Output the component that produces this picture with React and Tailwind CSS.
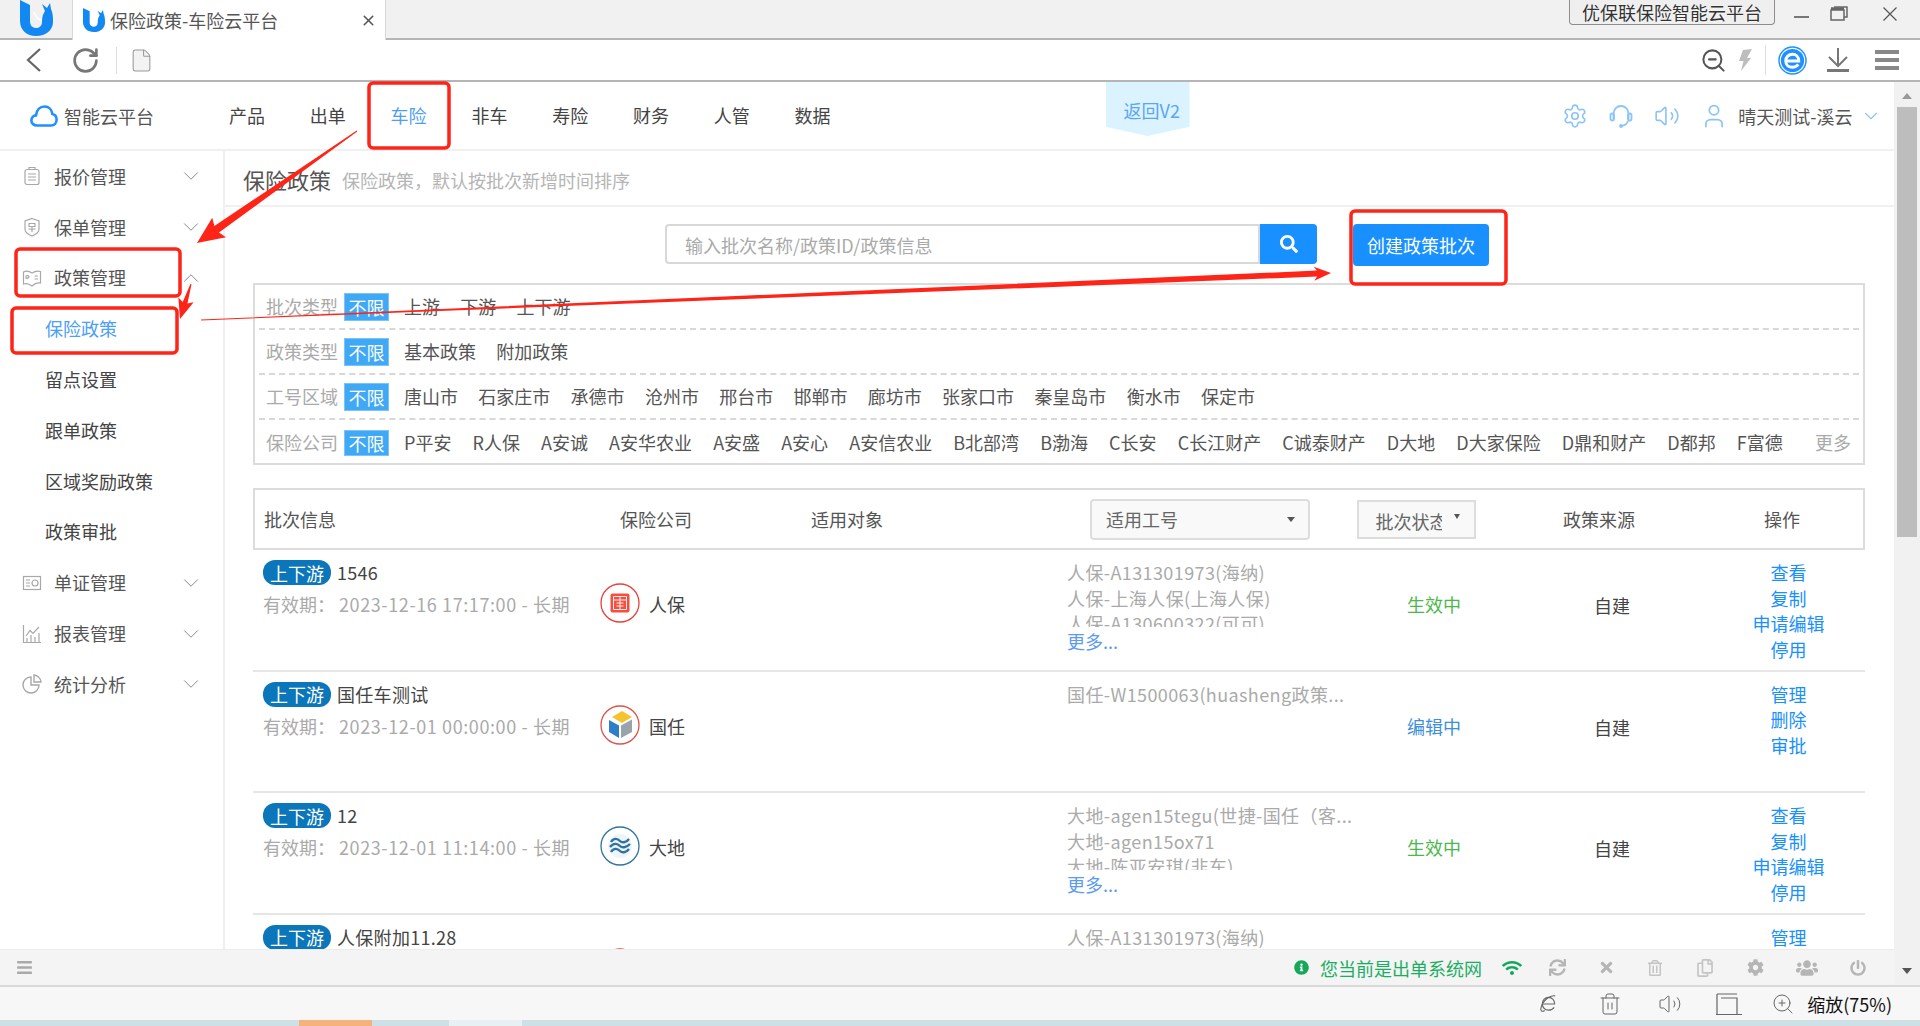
import { ChevronDown, ChevronUp, Settings, Volume2, User, RotateCw, File, X, ZoomOut, ZoomIn, Trash2 } from 'lucide-react';
import { FaInfoCircle, FaWifi, FaSync, FaTimes, FaRegTrashAlt, FaRegCopy, FaCog, FaUsers, FaPowerOff, FaBars, FaSearch } from 'react-icons/fa';

const RED = '#ff2418';

function BrandMark({ className }) {
  return (
    <svg viewBox="0 0 33 36" className={className}>
      <path d="M0 0 L10 5 V21 C10 26 13 28 16 28 C19 28 22 26 22 22 C22 17 23 14 25 11 L22 4 L27 8 L30 3 L31 9 C33 13 33 18 33 22 C33 30 26 36 16 36 C7 36 0 30 0 21 Z" fill="#1188f2" />
      <path d="M14 12 C16 18 19 20 22 20" stroke="#fff" strokeWidth="1.5" fill="none" />
    </svg>
  );
}

function CloudMark() {
  return (
    <svg viewBox="0 0 28 22" className="h-[22px] w-[28px]" fill="none" stroke="#1e90ff" strokeWidth="2.6">
      <path d="M7 20.5 C3.5 20.5 1.4 18.2 1.4 15.4 C1.4 12.6 3.4 10.6 6 10.4 C6.6 5 10 1.5 14.5 1.5 C18.8 1.5 21.8 4.6 22.4 9 C25 9.6 26.6 12 26.6 14.8 C26.6 18 24.4 20.5 21 20.5 Z" />
    </svg>
  );
}

function Headset() {
  return (
    <svg viewBox="0 0 24 24" className="h-[24px] w-[24px]" fill="none" stroke="#8cc4f8" strokeWidth="1.8">
      <path d="M4.5 15 V10 C4.5 5 8 2 12 2 C16 2 19.5 5 19.5 10 V15" />
      <rect x="1.5" y="9.5" width="3.5" height="7" rx="1.7" />
      <rect x="19" y="9.5" width="3.5" height="7" rx="1.7" />
      <path d="M19 17 C18 20 16 21.5 12.5 21.8" />
      <circle cx="12" cy="22" r="1" fill="#8cc4f8" />
    </svg>
  );
}

function EdgeBall() {
  return (
    <svg viewBox="0 0 30 30" className="h-[29px] w-[29px]" fill="none">
      <ellipse cx="15" cy="15" rx="14" ry="14" stroke="#1e90ff" strokeWidth="1.5" />
      <circle cx="15" cy="15" r="12" fill="#1e90ff" />
      <path d="M8 15.5 H21.5 C21.5 11 18.5 8.5 15 8.5 C11 8.5 8 11.5 8 15.5 C8 19.5 11 22 15 22 C17.5 22 19.5 21 21 19" stroke="#fff" strokeWidth="3" />
    </svg>
  );
}

function OutlineE() {
  return (
    <svg viewBox="0 0 20 20" className="h-[19px] w-[19px]" fill="none" stroke="#666" strokeWidth="1.2">
      <path d="M3.5 10.5 H16.5 C16.5 6 13.5 3.5 10 3.5 C6.5 3.5 3.5 6.5 3.5 10.5 C3.5 14.5 6.5 17 10 17 C12.5 17 14.5 16 16 14" />
      <path d="M17 2 C12 1 4 6 2 15 C1.5 18 3 19 6 17.5" />
    </svg>
  );
}

function RenbaoLogo() {
  return (
    <svg viewBox="0 0 40 40" className="h-[40px] w-[40px]" fill="none">
      <circle cx="20" cy="20" r="19" stroke="#e8403a" strokeWidth="1.3" />
      <rect x="10.5" y="10.5" width="19" height="19" rx="2" fill="#f4503f" />
      <path d="M13.5 13.5 H26.5 V26.5 H13.5 Z M13.5 17 H26.5 M20 13.5 V26.5 M16.5 20 H23.5 M16.5 23 H23.5" stroke="#fff" strokeWidth="0.9" />
    </svg>
  );
}

function GuorenLogo() {
  return (
    <svg viewBox="0 0 40 40" className="h-[40px] w-[40px]" fill="none">
      <circle cx="20" cy="20" r="19" stroke="#d9534f" strokeWidth="1.3" />
      <path d="M22 6 L32 12 L22 18 L12 12 Z" fill="#f4c430" />
      <path d="M9 15 L19 20.5 V33 L9 27 Z" fill="#2f7fc8" />
      <path d="M21 20.5 L32 14.5 V27 L21 33 Z" fill="#9aa3ad" />
    </svg>
  );
}

function DadiLogo() {
  return (
    <svg viewBox="0 0 40 40" className="h-[40px] w-[40px]" fill="none">
      <circle cx="20" cy="20" r="19" stroke="#2f739f" strokeWidth="1.3" />
      <circle cx="20" cy="20" r="12" fill="#eef4f7" />
      <path d="M11 16 C14 11 18 13 20 15 C22 17 26 17 29 13 M10 21 C14 16 18 18 20 20 C22 22 26 22 30 18 M11 26 C14 21 18 23 20 25 C22 27 26 27 29 23" stroke="#2f739f" strokeWidth="2.4" />
    </svg>
  );
}

function ReportIcon({ kind }) {
  const cls = 'h-[20px] w-[20px]';
  const stroke = { fill: 'none', stroke: '#a8a8a8', strokeWidth: 1.2 };
  if (kind === 'quote') {
    return (
      <svg viewBox="0 0 20 20" className={cls} {...stroke}>
        <rect x="3" y="3.5" width="14" height="15" rx="2" />
        <path d="M7 3.5 V1.5 H13 V3.5 M6 8 H14 M6 11 H14 M6 14 H14" />
      </svg>
    );
  }
  if (kind === 'shield') {
    return (
      <svg viewBox="0 0 20 20" className={cls} {...stroke}>
        <path d="M10 1.5 L17 4 V12 C17 15 14 17.5 10 19 C6 17.5 3 15 3 12 V4 Z" />
        <path d="M7 6.5 H13 V9.5 H7 Z M10 9.5 V15 M6.5 12 H13.5" />
      </svg>
    );
  }
  if (kind === 'book') {
    return (
      <svg viewBox="0 0 20 20" className={cls} {...stroke}>
        <path d="M1.5 4 C4.5 2.5 7 3 10 5 C13 3 15.5 2.5 18.5 3.5 V15 C15.5 14.5 13 15 10 18 C7 15.5 4.5 15 1.5 16 Z" />
        <path d="M4 8 L6 7.5 L7 9 L5.5 10.5 L4 10 Z M12.5 8 H16 M12.5 11 H16" />
      </svg>
    );
  }
  if (kind === 'doc') {
    return (
      <svg viewBox="0 0 20 20" className={cls} {...stroke}>
        <rect x="1.5" y="3.5" width="17" height="13" />
        <path d="M4 7 H8 M4 10 H8 M4 13 H8" />
        <circle cx="13" cy="10" r="3" />
      </svg>
    );
  }
  if (kind === 'chart') {
    return (
      <svg viewBox="0 0 20 20" className={cls} {...stroke}>
        <path d="M1.5 1 V18.5 H19 M4 12 L8 6.5 L11 9.5 L17 3" />
        <path d="M5 18 V14 M9 18 V11 M13 18 V13 M17 18 V9" />
      </svg>
    );
  }
  return (
    <svg viewBox="0 0 20 20" className={cls} fill="none" stroke="#a8a8a8" strokeWidth="1.4">
      <path d="M9 3 A8 8 0 1 0 17 11 H9 Z" />
      <path d="M12 1 A8 8 0 0 1 19 8 H12 Z" />
    </svg>
  );
}

// tapered annotation arrow, thin at the tail
function arrowPoints(x1, y1, x2, y2, tail, neck, headLen, headHalf) {
  const len = Math.hypot(x2 - x1, y2 - y1);
  const ux = (x2 - x1) / len;
  const uy = (y2 - y1) / len;
  const px = -uy;
  const py = ux;
  const bx = x2 - ux * headLen;
  const by = y2 - uy * headLen;
  const pts = [
    [x1 + px * tail, y1 + py * tail],
    [bx + px * neck, by + py * neck],
    [bx + px * headHalf - ux * 3, by + py * headHalf - uy * 3],
    [x2, y2],
    [bx - px * headHalf - ux * 3, by - py * headHalf - uy * 3],
    [bx - px * neck, by - py * neck],
    [x1 - px * tail, y1 - py * tail],
  ];
  return pts.map((p) => p.join(',')).join(' ');
}

function Annotations() {
  const boxes = [
    [369, 83, 80, 65],
    [16, 249, 164, 47],
    [12, 308, 165, 45],
    [1351, 211, 155, 73],
  ];
  return (
    <svg className="absolute left-0 top-0 z-50 h-[1026px] w-[1920px]" viewBox="0 0 1920 1026" fill="none">
      {boxes.map(([x, y, w, h]) => (
        <rect key={x} x={x} y={y} width={w} height={h} rx="4" stroke={RED} strokeWidth="3.5" />
      ))}
      <polygon points={arrowPoints(357, 131, 197, 243, 0.5, 4, 24, 12)} fill={RED} />
      <polygon points={arrowPoints(191, 284, 180, 319, 0.5, 2.5, 17, 8)} fill={RED} />
      <polygon points={arrowPoints(201, 320, 1331, 273, 0.4, 3, 14, 7)} fill={RED} />
    </svg>
  );
}

const navItems = ['产品', '出单', '车险', '非车', '寿险', '财务', '人管', '数据'];

const menu = [
  { label: '报价管理', icon: 'quote' },
  { label: '保单管理', icon: 'shield' },
  { label: '政策管理', icon: 'book', open: true },
  { label: '保险政策', sub: true, active: true },
  { label: '留点设置', sub: true },
  { label: '跟单政策', sub: true },
  { label: '区域奖励政策', sub: true },
  { label: '政策审批', sub: true },
  { label: '单证管理', icon: 'doc' },
  { label: '报表管理', icon: 'chart' },
  { label: '统计分析', icon: 'pie' },
];

const filters = [
  { label: '批次类型', items: ['上游', '下游', '上下游'], tag: 'h-[28px]', gap: 'gap-[20.3px]' },
  { label: '政策类型', items: ['基本政策', '附加政策'], tag: 'h-[28px]', gap: 'gap-[20.3px]' },
  { label: '工号区域', items: ['唐山市', '石家庄市', '承德市', '沧州市', '邢台市', '邯郸市', '廊坊市', '张家口市', '秦皇岛市', '衡水市', '保定市'], tag: 'h-[28px]', gap: 'gap-[20.3px]' },
  { label: '保险公司', items: ['P平安', 'R人保', 'A安诚', 'A安华农业', 'A安盛', 'A安心', 'A安信农业', 'B北部湾', 'B渤海', 'C长安', 'C长江财产', 'C诚泰财产', 'D大地', 'D大家保险', 'D鼎和财产', 'D都邦', 'F富德'], tag: 'h-[26px]', gap: 'gap-[21.1px]', more: true },
];

const rows = [
  {
    name: '1546',
    date: '2023-12-16 17:17:00 - 长期',
    logo: <RenbaoLogo />,
    company: '人保',
    codes: ['人保-A131301973(海纳)', '人保-上海人保(上海人保)', '人保-A130600322(可可)'],
    more: true,
    status: '生效中',
    statusClass: 'text-[#4cb84c]',
    actions: ['查看', '复制', '申请编辑', '停用'],
  },
  {
    name: '国任车测试',
    date: '2023-12-01 00:00:00 - 长期',
    logo: <GuorenLogo />,
    company: '国任',
    codes: ['国任-W1500063(huasheng政策...'],
    status: '编辑中',
    statusClass: 'text-[#3d8fd9]',
    actions: ['管理', '删除', '审批'],
  },
  {
    name: '12',
    date: '2023-12-01 11:14:00 - 长期',
    logo: <DadiLogo />,
    company: '大地',
    codes: ['大地-agen15tegu(世捷-国任（客...', '大地-agen15ox71', '大地-陈亚安琪(非车)'],
    more: true,
    status: '生效中',
    statusClass: 'text-[#4cb84c]',
    actions: ['查看', '复制', '申请编辑', '停用'],
  },
  {
    name: '人保附加11.28',
    date: '2023-11-28 00:00:00 - 长期',
    logo: <RenbaoLogo />,
    company: '人保',
    codes: ['人保-A131301973(海纳)'],
    status: '编辑中',
    statusClass: 'text-[#3d8fd9]',
    actions: ['管理'],
  },
];

const GRID = 'grid grid-cols-[347px_200px_267px_273px_200px_160px_165px]';

export default function App() {
  return (
    <div
      className="relative h-[1026px] w-[1920px] overflow-hidden bg-white text-[18px] text-[#444]"
      style={{ fontFamily: '"Noto Sans CJK SC", "Noto Sans", sans-serif' }}
    >
      {/* Browser tabs */}
      <div className="flex h-[40px] items-start border-b-2 border-[#b5b5b5] bg-[#f1f1f1]">
        <div className="flex w-[72px] pl-[20px]">
          <BrandMark className="h-[36px] w-[33px]" />
        </div>
        <div className="-mb-[2px] flex h-[40px] w-[314px] items-center border-x border-[#d8d8d8] bg-white pl-[10px] pr-[8px]">
          <BrandMark className="h-[24px] w-[22px]" />
          <span className="ml-[5px] leading-[26px] text-[#555]">保险政策-车险云平台</span>
          <X size={17} strokeWidth={2.2} className="ml-auto text-[#555]" />
        </div>
        <div className="ml-auto mr-[19px] flex h-[25px] w-[206px] items-center justify-center rounded-b border border-t-0 border-[#8d8d8d] bg-[#efefef] leading-[22px] text-[#333] [text-shadow:0_0_2px_#fff]">
          优保联保险智能云平台
        </div>
        <div className="mr-[23px] flex items-start">
          <div className="mt-[16px] h-[2px] w-[15px] bg-[#777]" />
          <svg viewBox="0 0 18 15" className="ml-[21px] mt-[6px] h-[15px] w-[18px]" fill="none" stroke="#666" strokeWidth="1.5">
            <path d="M1 4 H14 V14 H1 Z M1 3.5 H14 M4 1 H17 V11 H14" />
            <path d="M1 2.5 H14" strokeWidth="2.5" />
          </svg>
          <svg viewBox="0 0 14 14" className="ml-[35px] mt-[7px] h-[14px] w-[14px]" fill="none" stroke="#555" strokeWidth="1.2">
            <path d="M0.5 0.5 L13.5 13.5 M13.5 0.5 L0.5 13.5" />
          </svg>
        </div>
      </div>

      {/* Browser toolbar */}
      <div className="flex h-[42px] items-center border-b-2 border-[#b5b5b5] bg-white pl-[26px]">
        <svg viewBox="0 0 15 24" className="h-[24px] w-[15px]" fill="none" stroke="#666" strokeWidth="2.2">
          <path d="M14 1 L2 12 L14 23" />
        </svg>
        <RotateCw size={29} strokeWidth={2.2} className="ml-[30px] text-[#777]" />
        <div className="ml-[16px] h-[27px] w-px bg-[#ddd]" />
        <File size={25} strokeWidth={1} fill="#f3f3f3" className="ml-[12px] text-[#999]" />
        <ZoomOut size={27} strokeWidth={1.8} className="ml-auto text-[#555]" />
        <svg viewBox="0 0 14 22" className="ml-[11px] h-[22px] w-[14px]" fill="#bdbdbd">
          <path d="M5 1 L14 0 L9 9 L13 9 L3 22 L5.5 12 L1 12 Z" />
        </svg>
        <div className="ml-[13px] h-[30px] w-px bg-[#ddd]" />
        <div className="ml-[12px]"><EdgeBall /></div>
        <svg viewBox="0 0 22 24" className="ml-[20px] h-[24px] w-[22px]" fill="none" stroke="#777" strokeWidth="2">
          <path d="M11 0 V17 M2 9 L11 18 L20 9" />
          <path d="M0 22.5 H22" strokeWidth="3" />
        </svg>
        <div className="ml-[26px] mr-[21px] flex w-[24px] flex-col gap-[4px]">
          <div className="h-[4px] bg-[#888]" />
          <div className="h-[4px] bg-[#888]" />
          <div className="h-[4px] bg-[#888]" />
        </div>
      </div>

      <div className="flex h-[903px]">
        <div className="flex w-[1894px] flex-col">
          {/* App header */}
          <div className="flex h-[69px] shrink-0 items-center border-b-2 border-[#f0f0f0] pl-[30px]">
            <CloudMark />
            <span className="ml-[6px] leading-[26px] text-[#555]">智能云平台</span>
            <div className="ml-[75px] flex gap-[44.8px]">
              {navItems.map((item) => (
                <span key={item} className={item === '车险' ? 'text-[#4d9ef5]' : 'text-[#444]'}>{item}</span>
              ))}
            </div>
            <div className="ml-[275px] h-[54px] w-[84px] self-start bg-[#daf3fe] pl-[18px] pt-[15px] leading-[26px] text-[#5aa5f5] [clip-path:polygon(0_0,100%_0,100%_83%,50%_100%,0_83%)]">
              返回V2
            </div>
            <div className="ml-auto flex items-center pr-[12px]">
              <Settings size={26} strokeWidth={1.5} className="text-[#8cc4f8]" />
              <div className="ml-[21px]"><Headset /></div>
              <Volume2 size={26} strokeWidth={1.5} className="ml-[21px] text-[#8cc4f8]" />
              <User size={28} strokeWidth={1.5} className="ml-[20px] text-[#8cc4f8]" />
              <span className="ml-[10px] leading-[26px] text-[#555]">晴天测试-溪云</span>
              <ChevronDown size={22} strokeWidth={1.2} className="ml-[7.5px] text-[#8cc4f8]" />
            </div>
          </div>

          <div className="flex min-h-0 flex-1">
            {/* Sidebar */}
            <div className="w-[225px] shrink-0 border-r-2 border-[#f0f0f0]">
              {menu.map((item) => (
                <div key={item.label} className="flex h-[50.8px] items-center">
                  {item.sub ? (
                    <span className={`pl-[45px] ${item.active ? 'text-[#4d9ef5]' : 'text-[#444]'}`}>{item.label}</span>
                  ) : (
                    <>
                      <div className="ml-[22px] flex w-[32px]"><ReportIcon kind={item.icon} /></div>
                      <span className="text-[#555]">{item.label}</span>
                      {item.open ? (
                        <ChevronUp size={26} strokeWidth={0.9} className="ml-[52px] text-[#888]" />
                      ) : (
                        <ChevronDown size={26} strokeWidth={0.9} className="ml-[52px] text-[#888]" />
                      )}
                    </>
                  )}
                </div>
              ))}
            </div>

            {/* Main content */}
            <div className="min-w-0 flex-1 overflow-hidden">
              <div className="flex h-[56px] items-center border-b-2 border-[#f0f0f0] pl-[18px] pt-[2px]">
                <span className="text-[22px] leading-[30px] text-[#555]">保险政策</span>
                <span className="ml-[11px] pt-[2px] leading-[26px] text-[#b5b5b5]">保险政策，默认按批次新增时间排序</span>
              </div>

              <div className="flex pl-[440px] pt-[17px]">
                <div className="flex h-[40px] w-[595px] items-center rounded-l border-2 border-[#d8d8d8] pl-[18px] pt-[2px] leading-[26px] text-[#aaa]">
                  输入批次名称/政策ID/政策信息
                </div>
                <button className="flex h-[40px] w-[57px] items-center justify-center rounded-r bg-[#1890ff] text-white">
                  <FaSearch size={18} />
                </button>
                <button className="ml-[36px] h-[42px] w-[136px] rounded-sm bg-[#1890ff] leading-[26px] text-white">创建政策批次</button>
              </div>

              {/* Filters */}
              <div className="ml-[28px] mt-[17px] h-[182px] w-[1612px] border-2 border-[#dcdcdc]">
                {filters.map((f, i) => (
                  <div key={f.label} className={`mx-1 flex h-[45px] items-center pl-[7px] ${i < 3 ? 'border-b-2 border-dashed border-[#d8d8d8]' : ''}`}>
                    <span className="w-[78px] shrink-0 text-[#aaa]">{f.label}</span>
                    <span className={`flex w-[45px] shrink-0 items-center justify-center border border-[#7cc4f8] bg-[#3fa9f5] leading-none text-white ${f.tag}`}>不限</span>
                    <div className={`ml-[15px] flex whitespace-nowrap text-[#555] ${f.gap}`}>
                      {f.items.map((item) => (
                        <span key={item}>{item}</span>
                      ))}
                    </div>
                    {f.more && <span className="ml-auto pr-[8px] text-[#aaa]">更多</span>}
                  </div>
                ))}
              </div>

              {/* Table */}
              <div className={`${GRID} ml-[28px] mt-[23px] h-[62px] w-[1612px] items-center border-2 border-[#dcdcdc] text-[#555]`}>
                <span className="pl-[9px]">批次信息</span>
                <span className="pl-[18px]">保险公司</span>
                <span className="pl-[9px]">适用对象</span>
                <div className="pl-[21px]">
                  <div className="flex h-[41px] w-[220px] items-center rounded-sm border-2 border-[#ddd] bg-[#f9f9f9] pl-[14px] text-[#666]">
                    适用工号
                    <span className="ml-[109px] h-0 w-0 border-x-[4px] border-t-[5px] border-x-transparent border-t-[#555]" />
                  </div>
                </div>
                <div className="pl-[14.5px]">
                  <div className="flex h-[39px] w-[119px] items-center border-2 border-[#ddd] bg-[#f9f9f9] pl-[17px] text-[#666]">
                    <span className="mt-[4px] w-[66px] overflow-hidden whitespace-nowrap">批次状态</span>
                    <span className="mb-[6px] ml-[12px] h-0 w-0 border-x-[3px] border-t-[5px] border-x-transparent border-t-[#555]" />
                  </div>
                </div>
                <span className="pl-[21px]">政策来源</span>
                <span className="pl-[62px]">操作</span>
              </div>

              {rows.map((row) => (
                <div key={row.name} className={`${GRID} ml-[28px] h-[121.6px] w-[1612px] border-b-2 border-[#e6e6e6]`}>
                  <div className="pl-[10px] pt-[10px]">
                    <div className="flex h-[25px] items-center">
                      <span className="flex h-[25px] w-[68px] items-center justify-center rounded-[12px] bg-[#0b76b9] leading-none text-white">上下游</span>
                      <span className="ml-[6px] tracking-[0.3px] text-[#444]">{row.name}</span>
                    </div>
                    <div className="mt-[6px] whitespace-nowrap leading-[26px] text-[#aaa]">
                      有效期：<span className="ml-[4px] tracking-[0.6px]">{row.date}</span>
                    </div>
                  </div>
                  <div className="flex items-start pt-[33px]">
                    {row.logo}
                    <span className="ml-[9px] mt-[8px] leading-[26px] text-[#444]">{row.company}</span>
                  </div>
                  <div />
                  <div className="pt-[10px]">
                    <div className="h-[67px] w-[320px] overflow-hidden whitespace-nowrap leading-[25.6px] tracking-[0.4px] text-[#aaa]">
                      {row.codes.map((code) => (
                        <div key={code}>{code}</div>
                      ))}
                    </div>
                    {row.more && <div className="mt-px leading-[26px] text-[#5b9bf0]">更多...</div>}
                  </div>
                  <div className={`pl-[67px] pt-[41px] leading-[26px] ${row.statusClass}`}>{row.status}</div>
                  <div className="pl-[54px] pt-[42px] leading-[26px] text-[#444]">自建</div>
                  <div className="pl-[12px] pt-[10px] text-center leading-[25.6px] text-[#1890ff]">
                    {row.actions.map((action) => (
                      <div key={action}>{action}</div>
                    ))}
                  </div>
                </div>
              ))}
            </div>
          </div>

          {/* Status bar */}
          <div className="flex h-[36px] shrink-0 items-center border-t border-[#ececec] bg-[#f4f4f4] pl-[16px]">
            <FaBars size={17} className="text-[#aaa]" />
            <FaInfoCircle size={15} className="ml-auto text-[#14a85a]" />
            <span className="ml-[11px] leading-[26px] text-[#1aae63]">您当前是出单系统网</span>
            <FaWifi size={20} className="ml-[20px] text-[#14a85a]" />
            <FaSync size={17} className="ml-[27px] text-[#b5b5b5]" />
            <FaTimes size={17} className="ml-[32px] text-[#b5b5b5]" />
            <FaRegTrashAlt size={16} className="ml-[32px] text-[#c4c4c4]" />
            <FaRegCopy size={18} className="ml-[33px] text-[#c4c4c4]" />
            <FaCog size={17} className="ml-[33px] text-[#b5b5b5]" />
            <FaUsers size={22} className="ml-[32px] text-[#b5b5b5]" />
            <FaPowerOff size={16} className="ml-[32px] mr-[28px] text-[#b5b5b5]" />
          </div>
        </div>

        {/* Page scrollbar */}
        <div className="flex w-[26px] flex-col items-center bg-[#f1f1f1]">
          <span className="mt-[11px] h-0 w-0 border-x-[5px] border-b-[6px] border-x-transparent border-b-[#999]" />
          <div className="mt-[8px] h-[430px] w-[20px] bg-[#bdbdbd]" />
          <span className="mb-[11px] mt-auto h-0 w-0 border-x-[5px] border-t-[6px] border-x-transparent border-t-[#555]" />
        </div>
      </div>

      {/* Browser status bar */}
      <div className="flex h-[35px] items-center border-t-2 border-[#d9d9d9] bg-[#f7f7f7] pr-[28px]">
        <div className="ml-auto"><OutlineE /></div>
        <Trash2 size={24} strokeWidth={1} className="ml-[40px] text-[#666]" />
        <Volume2 size={24} strokeWidth={1} className="ml-[36px] text-[#666]" />
        <svg viewBox="0 0 26 22" className="ml-[34px] h-[22px] w-[26px]" fill="none" stroke="#666" strokeWidth="1.2">
          <path d="M1 1 H21 M1 1 V21 M5 5 H21 V21 M0 21.5 H26" />
        </svg>
        <ZoomIn size={24} strokeWidth={1} className="ml-[29px] text-[#666]" />
        <span className="ml-[12px] leading-[26px] text-[#111]">缩放(75%)</span>
      </div>

      <div className="flex h-[6px] bg-[#cde0e6]">
        <div className="ml-[299px] w-[73px] bg-[#f5b27a]" />
        <div className="ml-[77px] w-[73px] bg-[#e7f1f3]" />
      </div>

      <Annotations />
    </div>
  );
}
